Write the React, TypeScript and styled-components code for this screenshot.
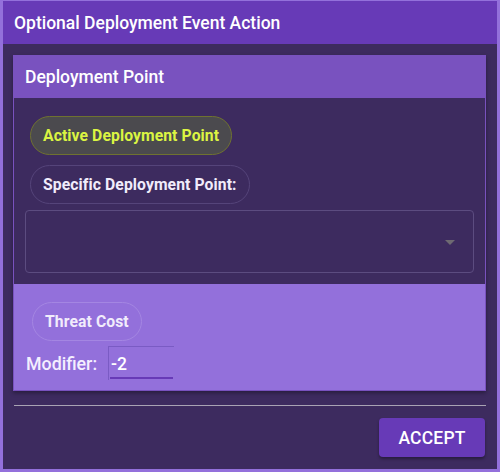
import React from "react";
import styled, { createGlobalStyle } from "styled-components";

const Global = createGlobalStyle`
  html, body { margin: 0; padding: 0; background: #3d2b5f; }
  * { box-sizing: border-box; }
  body { font-family: Roboto, "Liberation Sans", Arial, sans-serif; }
`;

const Dialog = styled.div`
  width: 500px;
  height: 472px;
  border-style: solid;
  border-color: #9370db;
  border-width: 1px 3px 3px 3px;
  background: #3d2b5f;
  display: flex;
  flex-direction: column;
`;

const TitleBar = styled.div`
  height: 43px;
  flex: none;
  background: #673ab7;
  color: #ffffff;
  font-size: 17.5px;
  font-weight: 500;
  display: flex;
  align-items: center;
  padding-left: 11px;
`;

const Content = styled.div`
  flex: 1;
  display: flex;
  flex-direction: column;
  padding: 11px 11px 0 10px;
`;

const Card = styled.div`
  border: 1px solid #7952bf;
  box-shadow: 0 2px 4px rgba(0, 0, 0, 0.35);
  display: flex;
  flex-direction: column;
`;

const CardHeader = styled.div`
  height: 42px;
  background: #7952bf;
  color: #ffffff;
  font-size: 17.5px;
  font-weight: 500;
  display: flex;
  align-items: center;
  padding-left: 11px;
`;

const DarkSection = styled.div`
  background: #3d2b5f;
  padding: 18px 11px 11px 11px;
  display: flex;
  flex-direction: column;
  align-items: flex-start;
`;

const LightSection = styled.div`
  background: #9370db;
  height: 106px;
  padding: 18px 11px 0 12px;
  display: flex;
  flex-direction: column;
  align-items: flex-start;
`;

const Chip = styled.div<{ $variant: "active" | "plain" | "light" }>`
  height: 39px;
  border-radius: 20px;
  padding: 0 12px;
  margin-left: ${(p) => (p.$variant === "light" ? "6px" : "5px")};
  display: inline-flex;
  align-items: center;
  font-size: 15.7px;
  font-weight: 700;
  letter-spacing: 0.1px;
  background: ${(p) => (p.$variant === "active" ? "#4b4a4e" : "transparent")};
  color: ${(p) => (p.$variant === "active" ? "#dbf542" : "#f1ecfb")};
  border: 1px solid
    ${(p) =>
      p.$variant === "active"
        ? "#6f7230"
        : p.$variant === "light"
        ? "#a486e2"
        : "#55447a"};
`;

const ChipGap = styled.div`
  height: 10px;
`;

const SelectBox = styled.div`
  margin-top: 6px;
  width: 100%;
  height: 63px;
  border: 1px solid #5c4c80;
  border-radius: 4px;
  display: flex;
  align-items: center;
  justify-content: flex-end;
  padding-right: 18px;
`;

const Arrow = styled.div`
  width: 0;
  height: 0;
  border-left: 5px solid transparent;
  border-right: 5px solid transparent;
  border-top: 5px solid #6e6a72;
  margin-top: 2px;
`;

const ModifierRow = styled.div`
  margin-top: 5px;
  display: flex;
  align-items: center;
  gap: 11px;
`;

const Label = styled.span`
  color: #f4efff;
  font-size: 17.8px;
  font-weight: 500;
`;

const InputWrap = styled.div`
  width: 66px;
  height: 34px;
  border-top: 1px solid #7a5bc4;
  border-left: 1px solid #7a5bc4;
  display: flex;
  flex-direction: column;
  justify-content: flex-end;
  padding: 0 1px 1px 1px;
`;

const Input = styled.input`
  width: 100%;
  background: transparent;
  border: none;
  border-bottom: 2px solid #673ab7;
  outline: none;
  color: #ffffff;
  font-family: Roboto, "Liberation Sans", Arial, sans-serif;
  font-size: 17.5px;
  font-weight: 500;
  padding: 0 0 3px 1px;
`;

const Divider = styled.div`
  margin-top: 14px;
  height: 1px;
  background: #a9a3b4;
  margin-left: 1px;
`;

const Footer = styled.div`
  display: flex;
  justify-content: flex-end;
  padding-top: 12px;
  margin-right: 1px;
`;

const Button = styled.button`
  width: 106px;
  height: 39px;
  background: #673ab7;
  color: #ffffff;
  border: none;
  border-radius: 4px;
  box-shadow: 0 2px 3px rgba(0, 0, 0, 0.35);
  font-family: Roboto, "Liberation Sans", Arial, sans-serif;
  font-size: 17.5px;
  font-weight: 500;
  letter-spacing: 0.2px;
`;

export default function App() {
  return (
    <>
      <Global />
      <Dialog>
        <TitleBar>Optional Deployment Event Action</TitleBar>
        <Content>
          <Card>
            <CardHeader>Deployment Point</CardHeader>
            <DarkSection>
              <Chip $variant="active">Active Deployment Point</Chip>
              <ChipGap />
              <Chip $variant="plain">Specific Deployment Point:</Chip>
              <SelectBox>
                <Arrow />
              </SelectBox>
            </DarkSection>
            <LightSection>
              <Chip $variant="light">Threat Cost</Chip>
              <ModifierRow>
                <Label>Modifier:</Label>
                <InputWrap>
                  <Input defaultValue="-2" />
                </InputWrap>
              </ModifierRow>
            </LightSection>
          </Card>
          <Divider />
          <Footer>
            <Button>ACCEPT</Button>
          </Footer>
        </Content>
      </Dialog>
    </>
  );
}
